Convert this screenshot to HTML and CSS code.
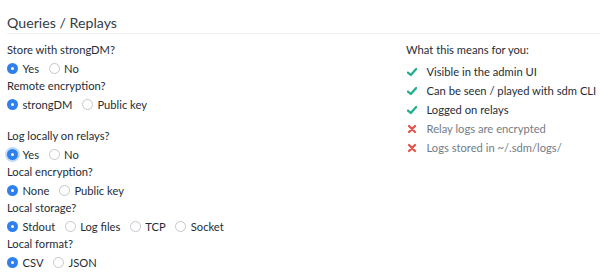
FILE: index.html
```html
<!DOCTYPE html>
<html lang="en">
<head>
  <meta charset="UTF-8">
  <title>Queries / Replays</title>
  <link rel="stylesheet" href="styles.css">
</head>
<body>
  <div class="panel">
    <h2 class="title">Queries / Replays</h2>
    <div class="content">
      <div class="options">
        <div class="group">
          <div class="label">Store with strongDM?</div>
          <div class="radios">
            <span class="radio checked"></span><span class="opt">Yes</span>
            <span class="radio"></span><span class="opt">No</span>
          </div>
          <div class="label">Remote encryption?</div>
          <div class="radios">
            <span class="radio checked"></span><span class="opt">strongDM</span>
            <span class="radio"></span><span class="opt">Public key</span>
          </div>
        </div>
        <div class="group">
          <div class="label">Log locally on relays?</div>
          <div class="radios">
            <span class="radio checked focus"></span><span class="opt">Yes</span>
            <span class="radio"></span><span class="opt">No</span>
          </div>
          <div class="label">Local encryption?</div>
          <div class="radios">
            <span class="radio checked"></span><span class="opt">None</span>
            <span class="radio"></span><span class="opt">Public key</span>
          </div>
          <div class="label">Local storage?</div>
          <div class="radios">
            <span class="radio checked"></span><span class="opt">Stdout</span>
            <span class="radio"></span><span class="opt">Log files</span>
            <span class="radio"></span><span class="opt">TCP</span>
            <span class="radio"></span><span class="opt">Socket</span>
          </div>
          <div class="label">Local format?</div>
          <div class="radios">
            <span class="radio checked"></span><span class="opt">CSV</span>
            <span class="radio"></span><span class="opt">JSON</span>
          </div>
        </div>
      </div>
      <div class="means">
        <div class="means-title">What this means for you:</div>
        <ul class="list">
          <li>
            <svg class="ico" viewBox="0 0 10 10"><path d="M1 5.6 L3.8 8 L9.2 2" fill="none" stroke="#1fae8c" stroke-width="2.3" stroke-linecap="round" stroke-linejoin="round"/></svg>
            Visible in the admin UI
          </li>
          <li>
            <svg class="ico" viewBox="0 0 10 10"><path d="M1 5.6 L3.8 8 L9.2 2" fill="none" stroke="#1fae8c" stroke-width="2.3" stroke-linecap="round" stroke-linejoin="round"/></svg>
            Can be seen / played with sdm CLI
          </li>
          <li>
            <svg class="ico" viewBox="0 0 10 10"><path d="M1 5.6 L3.8 8 L9.2 2" fill="none" stroke="#1fae8c" stroke-width="2.3" stroke-linecap="round" stroke-linejoin="round"/></svg>
            Logged on relays
          </li>
          <li class="no">
            <svg class="ico" viewBox="0 0 10 10"><path d="M2 2 L8 8 M8 2 L2 8" fill="none" stroke="#e8534a" stroke-width="2.3" stroke-linecap="round"/></svg>
            Relay logs are encrypted
          </li>
          <li class="no">
            <svg class="ico" viewBox="0 0 10 10"><path d="M2 2 L8 8 M8 2 L2 8" fill="none" stroke="#e8534a" stroke-width="2.3" stroke-linecap="round"/></svg>
            Logs stored in ~/.sdm/logs/
          </li>
        </ul>
      </div>
    </div>
  </div>
</body>
</html>
```

FILE: styles.css
```css
* {
  margin: 0;
  padding: 0;
  box-sizing: border-box;
}

body {
  background: #fff;
  font-family: Lato, "Open Sans", sans-serif;
  color: #262d36;
  width: 600px;
  height: 277px;
  overflow: hidden;
}

.panel {
  padding: 13px 0 0 7px;
}

.title {
  font-size: 14.2px;
  font-weight: 400;
  color: #333c47;
  line-height: 20px;
  border-bottom: 1px solid #eef0f2;
}

.content {
  display: flex;
  padding-top: 7px;
}

.options {
  width: 399px;
  flex: none;
}

.group + .group {
  margin-top: 14px;
}

.label {
  font-size: 11.2px;
  line-height: 18px;
}

.radios {
  display: flex;
  align-items: center;
  height: 18px;
  font-size: 11.2px;
}

.radio {
  width: 11px;
  height: 11px;
  border-radius: 50%;
  border: 1px solid #c3c7cc;
  background: #fff;
  margin-right: 4.5px;
  flex: none;
}

.radio.checked {
  border: none;
  background: #2f80ed;
  position: relative;
}

.radio.checked::after {
  content: "";
  position: absolute;
  left: 4px;
  top: 4px;
  width: 3px;
  height: 3px;
  border-radius: 50%;
  background: #fff;
}

.radio.focus {
  box-shadow: 0 0 0 2px rgba(47, 128, 237, 0.3);
}

.opt {
  margin-right: 9.5px;
}

.means {
  flex: 1;
  white-space: nowrap;
}

.means-title {
  font-size: 11.2px;
  line-height: 18px;
  margin-bottom: 3px;
}

.list {
  list-style: none;
}

.list li {
  display: flex;
  align-items: center;
  font-size: 11.2px;
  line-height: 19.1px;
  height: 19.1px;
}

.list li.no {
  color: #737c86;
}

.ico {
  width: 10px;
  height: 10px;
  margin: 0 10px 0 0.5px;
  flex: none;
}
```
